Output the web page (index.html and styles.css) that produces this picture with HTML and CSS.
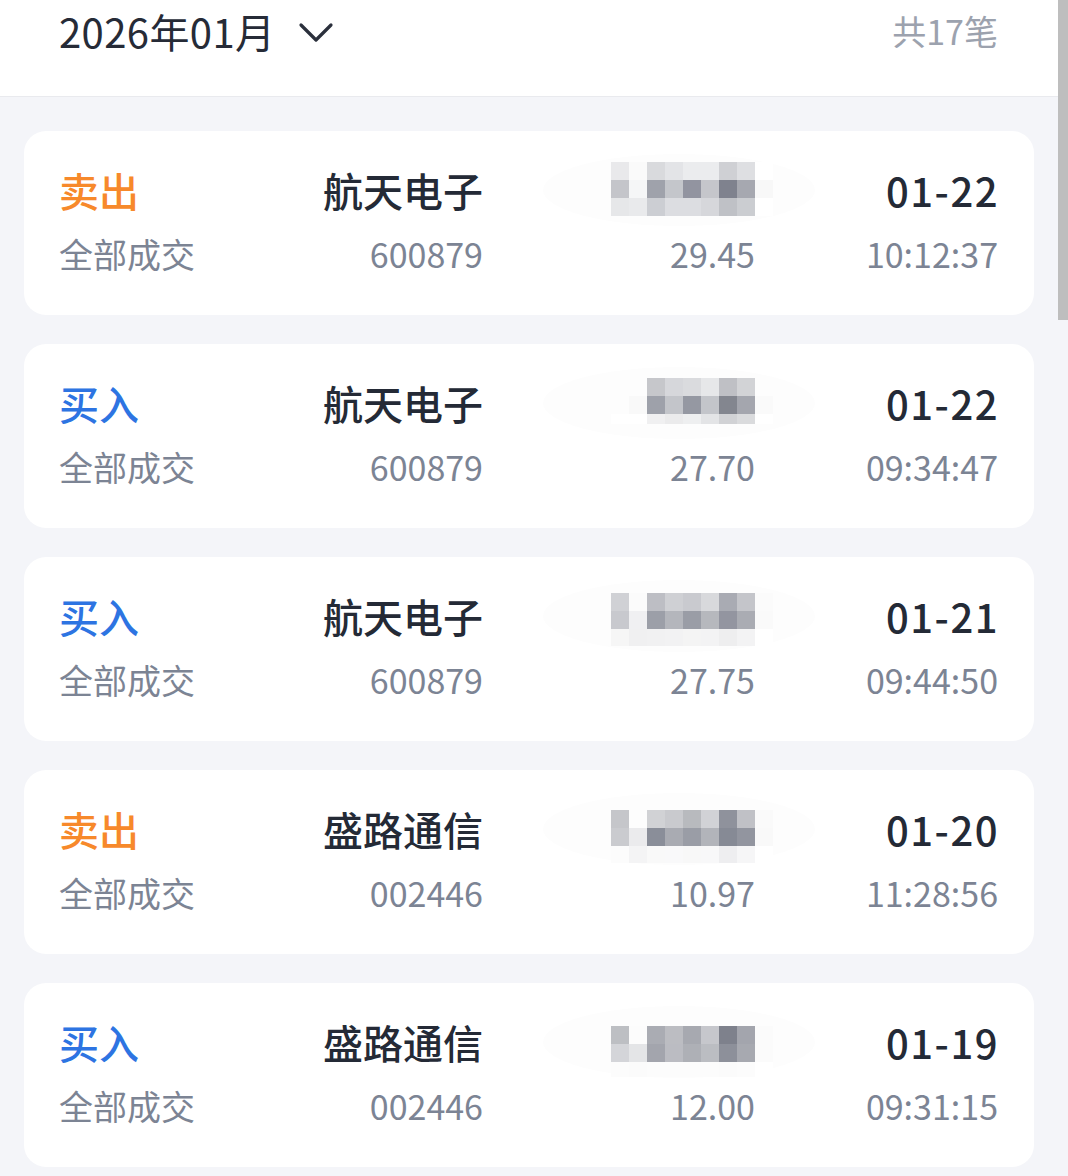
FILE: index.html
```html
<!DOCTYPE html>
<html lang="zh-CN">
<head>
    <meta charset="UTF-8">
    <meta name="viewport" content="width=device-width, initial-scale=1.0">
    <title>成交记录</title>
<link rel="stylesheet" href="styles.css">
</head>
<body>
<div class="page">
    <div class="header">
        <div class="month">
            <span class="month-text">2026年01月</span>
            <svg class="chevron" width="36" height="22" viewBox="0 0 36 22"><path d="M3 4 L18 19 L33 4" fill="none" stroke="#2b303c" stroke-width="3.2" stroke-linecap="round" stroke-linejoin="round"/></svg>
        </div>
        <span class="count">共17笔</span>
    </div>

    <div class="list">
        <div class="card">
            <span class="side sell">卖出</span>
            <span class="name">航天电子</span>
            <span class="qty"><i class="mosaic"></i></span>
            <span class="date">01-22</span>
            <span class="status">全部成交</span>
            <span class="code">600879</span>
            <span class="price">29.45</span>
            <span class="time">10:12:37</span>
        </div>
        <div class="card">
            <span class="side buy">买入</span>
            <span class="name">航天电子</span>
            <span class="qty"><i class="mosaic"></i></span>
            <span class="date">01-22</span>
            <span class="status">全部成交</span>
            <span class="code">600879</span>
            <span class="price">27.70</span>
            <span class="time">09:34:47</span>
        </div>
        <div class="card">
            <span class="side buy">买入</span>
            <span class="name">航天电子</span>
            <span class="qty"><i class="mosaic"></i></span>
            <span class="date">01-21</span>
            <span class="status">全部成交</span>
            <span class="code">600879</span>
            <span class="price">27.75</span>
            <span class="time">09:44:50</span>
        </div>
        <div class="card">
            <span class="side sell">卖出</span>
            <span class="name">盛路通信</span>
            <span class="qty"><i class="mosaic"></i></span>
            <span class="date">01-20</span>
            <span class="status">全部成交</span>
            <span class="code">002446</span>
            <span class="price">10.97</span>
            <span class="time">11:28:56</span>
        </div>
        <div class="card">
            <span class="side buy">买入</span>
            <span class="name">盛路通信</span>
            <span class="qty"><i class="mosaic"></i></span>
            <span class="date">01-19</span>
            <span class="status">全部成交</span>
            <span class="code">002446</span>
            <span class="price">12.00</span>
            <span class="time">09:31:15</span>
        </div>
    </div>

    <div class="scroll-thumb"></div>
</div>

<script>
// pixelated quantity, one entry per card: offset, height, 3 rows x 9 cells
let blurs = [
    {top: 0, h: 54, cells: [
        "#e9e9eb","#fafafa","#d9dadd","#e3e4e7","#ebecee","#ebecee","#cfd0d4","#dedfe2","#ffffff",
        "#c4c5ca","#f5f6f7","#9fa2ab","#c4c6cb","#9294a0","#c5c6cb","#7f828e","#a6a8b0","#f8f8f8",
        "#e6e7e9","#e9eaec","#ccced3","#dcdde1","#dcdde1","#d6d7db","#bfc1c6","#cbcdd1","#ffffff"]},
    {top: 3, h: 46, cells: [
        "#fdfdfd","#fdfdfd","#c6c7cb","#d6d7db","#dadbde","#e6e7e9","#bfc0c5","#d2d3d6","#fdfdfd",
        "#fdfdfd","#f9f9f9","#9ea1aa","#c3c5ca","#9598a2","#c3c5ca","#83868f","#a4a6ae","#fafafa",
        "#ffffff","#ffffff","#f0f0f1","#ebebec","#eeeff0","#e3e4e6","#d1d2d5","#dadbdd","#ffffff"]},
    {top: 5, h: 53, cells: [
        "#d0d1d5","#fbfbfb","#bdbec4","#cfd0d4","#c9cacf","#d8d9dc","#a9abb3","#c4c5ca","#fbfbfb",
        "#c8c9ce","#f0f0f2","#9c9fa8","#b4b6bc","#9a9da6","#b6b8bd","#9395a0","#aaacb3","#fafafa",
        "#f6f6f6","#f0f0f1","#f1f1f2","#f2f2f3","#f4f4f4","#f3f3f4","#eeeeef","#f3f3f4","#ffffff"]},
    {top: 9, h: 53, cells: [
        "#c5c6ca","#fdfdfd","#d1d2d5","#c9cace","#b8babe","#d1d2d6","#8f929c","#c0c1c6","#fafafa",
        "#cacbcf","#ebebed","#8a8e99","#a9abb2","#9a9da6","#b2b4ba","#868a95","#92959f","#f9f9f9",
        "#fcfcfc","#f4f4f5","#f9f9f9","#f9f9fa","#f8f8f8","#f8f8f9","#eeeef0","#f6f6f7","#ffffff"]},
    {top: 12, h: 51, cells: [
        "#bdbfc3","#fcfcfc","#aaacb3","#bcbdc2","#a7a9b0","#c6c7cc","#7e818c","#a3a5ad","#fbfbfb",
        "#d4d5d9","#e4e5e7","#a3a5ad","#bbbcc2","#aeb0b6","#bbbdc2","#8d909a","#a7a9b0","#fbfbfb",
        "#fcfcfc","#fbfbfb","#fcfcfc","#fcfcfc","#fcfcfc","#fcfcfc","#fbfbfb","#fcfcfc","#ffffff"]}
];

let mosaics = document.querySelectorAll(".mosaic");
mosaics.forEach((m, i) => {
    let b = blurs[i];
    m.style.top = b.top + "px";
    m.style.height = b.h + "px";
    b.cells.forEach(c => {
        const cell = document.createElement("b");
        cell.style.backgroundColor = c;
        m.appendChild(cell);
    });
});
</script>
</body>
</html>
```

FILE: styles.css
```css
*{box-sizing: border-box;}
body{
    margin: 0;
    background-color: #f4f5f9;
    font-family: "Noto Sans CJK SC", "Noto Sans", sans-serif;
}
.page{
    position: relative;
    height: 1176px;
    overflow: hidden;
}

/* month bar */
.header{
    display: flex;
    justify-content: space-between;
    align-items: flex-start;
    width: 1058px;
    height: 97px;
    padding: 7px 60px 0 59px;
    background-color: #ffffff;
    border-bottom: 1px solid #e9eaee;
}
.month{
    display: flex;
    align-items: center;
    gap: 23px;
    height: 48px;
}
.month-text{
    font-size: 40px;
    line-height: 48px;
    color: #262b37;
    letter-spacing: 0.4px;
}
.chevron{
    display: block;
    margin-top: 2px;
}
.count{
    font-size: 34px;
    line-height: 48px;
    color: #9ca2ae;
}

/* trade cards */
.list{
    display: flex;
    flex-direction: column;
    gap: 29px;
    width: 1058px;
    padding: 34px 24px;
}
.card{
    display: grid;
    grid-template-columns: 150px 274px 272px 1fr;
    grid-template-rows: 56px 48px;
    row-gap: 12px;
    height: 184px;
    padding: 31px 36px 37px 35px;
    background-color: #ffffff;
    border-radius: 22px;
}
.card span{
    white-space: nowrap;
}
.side, .name, .date{
    font-size: 40px;
    line-height: 56px;
    font-weight: 500;
}
.sell{color: #f7892b;}
.buy{color: #2d74e2;}
.name, .date{
    text-align: right;
    color: #242a36;
}
.date{
    letter-spacing: 1.5px;
    margin-right: -1px;
}
.status, .code, .price, .time{
    font-size: 34px;
    line-height: 48px;
    color: #7c8494;
}
.code, .price, .time{
    text-align: right;
}
.qty{
    position: relative;
}

/* pixelated cover over the quantity */
.mosaic{
    position: absolute;
    right: -18px;
    width: 162px;
    display: grid;
    grid-template-columns: repeat(9, 18px);
    grid-auto-rows: 18px;
    overflow: hidden;
}
.qty::before{
    content: "";
    position: absolute;
    left: 60px;
    right: -60px;
    top: -8px;
    height: 72px;
    border-radius: 50%;
    background-color: #fdfdfd;
}

.scroll-thumb{
    position: absolute;
    top: 0;
    right: 0;
    width: 10px;
    height: 320px;
    background-color: #bebebe;
}
```
